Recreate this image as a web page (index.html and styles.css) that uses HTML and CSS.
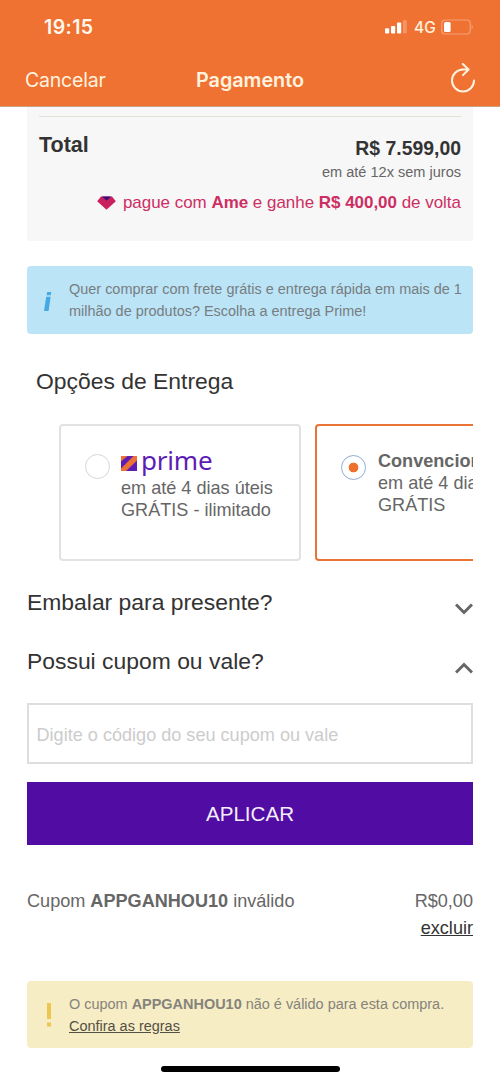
FILE: index.html
```html
<!DOCTYPE html>
<html lang="pt-BR">
<head>
<meta charset="utf-8">
<title>Pagamento</title>
<link rel="stylesheet" href="styles.css">
</head>
<body>
<header class="header">
  <div class="status">
    <span class="time">19:15</span>
    <div class="indicators">
      <svg class="signal" width="24" height="14" viewBox="0 0 24 14" fill="#fff"><rect x="1" y="8.2" width="4.2" height="5.2" rx="1"/><rect x="7" y="6" width="4.2" height="7.4" rx="1"/><rect x="13" y="2.6" width="4.2" height="10.8" rx="1"/><rect x="19" y="0" width="3.8" height="13.4" rx="1" opacity=".25"/></svg>
      <span class="network">4G</span>
      <svg width="33" height="17" viewBox="0 0 33 17"><rect x=".7" y="1" width="28.5" height="14" rx="3.5" fill="none" stroke="#f5a076" stroke-width="1.2"/><rect x="3" y="3" width="6.6" height="10" rx="1.5" fill="#fff"/><path d="M30.6 5.5q2.6 2.5 0 5z" fill="#f5a076"/></svg>
    </div>
  </div>
  <nav class="navbar">
    <span class="cancel">Cancelar</span>
    <h1 class="title">Pagamento</h1>
    <svg class="reload" width="26" height="30" viewBox="0 0 26 30" fill="none" stroke="#fff3df" stroke-width="2" stroke-linecap="round" stroke-linejoin="round"><path d="M24 17.5a11 11 0 1 1-11-11h5M12.8 1l5.8 5.5-5.6 5.6"/></svg>
  </nav>
</header>
<main class="content">
  <section class="summary">
    <div class="summary-row">
      <h2 class="total-label">Total</h2>
      <div class="amounts">
        <strong class="total">R$ 7.599,00</strong>
        <span class="installments">em até 12x sem juros</span>
      </div>
    </div>
    <p class="cashback">
      <svg width="19" height="14" viewBox="0 0 19 14"><path d="M4 .5h11l3.8 4.8L9.5 13.8.2 5.3z" fill="#c91f5c"/><path d="M5 .5h9L9.7 4.8z" fill="#36107f"/></svg>
      <span>pague com <b>Ame</b> e ganhe <b>R$ 400,00</b> de volta</span>
    </p>
  </section>
  <aside class="notice info">
    <svg class="notice-icon" width="11" height="22" viewBox="0 0 11 22" fill="#45a9e3"><path d="M5.2 1h4.1l-.6 3.2H4.6zM4.2 5.8h4.4L6.6 20H2z"/></svg>
    <p>Quer comprar com frete grátis e entrega rápida em mais de 1<br>milhão de produtos? Escolha a entrega Prime!</p>
  </aside>
  <h2 class="section-title">Opções de Entrega</h2>
  <div class="options">
    <div class="option">
      <span class="radio"></span>
      <div class="option-text">
        <div class="prime"><svg width="16" height="15" viewBox="0 0 16 15"><path fill="#5d1db5" d="M0 0h16v15H0z"/><path fill="#ed7135" d="M0 0h6.500L0 5.500zM16 0v4.500L5 15H0v-2.500L12.500 0z"/></svg><span class="prime-name">prime</span></div>
        <p>em até 4 dias úteis<br>GRÁTIS - ilimitado</p>
      </div>
    </div>
    <div class="option selected">
      <span class="radio"></span>
      <div class="option-text">
        <p><b>Convencional</b><br>em até 4 dias úteis<br>GRÁTIS</p>
      </div>
    </div>
  </div>
  <div class="accordion gift"><h2>Embalar para presente?</h2><svg width="18" height="12" viewBox="0 0 18 12" fill="none" stroke="#666" stroke-width="3"><path d="m1 1.500 8 8 8-8"/></svg></div>
  <div class="accordion coupon"><h2>Possui cupom ou vale?</h2><svg width="18" height="12" viewBox="0 0 18 12" fill="none" stroke="#666" stroke-width="3"><path d="m1 10.500 8-8 8 8"/></svg></div>
  <input class="code" type="text" placeholder="Digite o código do seu cupom ou vale">
  <button class="apply">APLICAR</button>
  <div class="coupon-result">
    <p>Cupom <b>APPGANHOU10</b> inválido</p>
    <div class="coupon-value"><span>R$0,00</span><a class="remove">excluir</a></div>
  </div>
  <aside class="notice warning">
    <svg class="notice-icon" width="11" height="26" viewBox="0 0 11 26" fill="#ebc650"><path d="M5 1h4v16H5zM5 20.500h4v4H5z"/></svg>
    <p>O cupom <b>APPGANHOU10</b> não é válido para esta compra.<br><a class="rules">Confira as regras</a></p>
  </aside>
</main>
<footer class="home"><span class="home-bar"></span></footer>
</body>
</html>
```
FILE: styles.css
```css
* { box-sizing: border-box; }
body { margin: 0; height: 1082px; overflow: hidden; background: #fff; color: #666; font-family: "Liberation Sans", Arial, sans-serif; }
h1, h2, p { margin: 0; font-weight: 400; }
.header { height: 107px; background: #ef7233; border-bottom: 1px solid #c8a184; color: #fff3df; font-family: Inter, sans-serif; }
.status { height: 54px; padding: 0 26px 0 44px; display: flex; justify-content: space-between; align-items: center; }
.time { font-size: 19.5px; font-weight: 600; letter-spacing: .4px; color: #fff8ec; }
.indicators { display: flex; align-items: center; }
.signal { margin-right: 6px; }
.network { width: 27px; font-size: 15.5px; font-weight: 500; }
.navbar { height: 52px; padding: 0 25px; display: grid; grid-template-columns: 1fr auto 1fr; align-items: center; }
.cancel { font-size: 19.5px; letter-spacing: -.2px; }
.title { font-size: 19.8px; font-weight: 600; }
.reload { justify-self: end; margin-right: -1px; margin-bottom: 4px; }
.content { padding: 0 27px; }
.summary { height: 134px; padding: 9px 12px 0; background: #f7f7f7; }
.summary-row { display: flex; justify-content: space-between; padding-top: 15px; border-top: 1px solid #dfe3d8; }
.total-label { font-size: 21.5px; line-height: 26px; font-weight: 700; color: #333; }
.amounts { display: flex; flex-direction: column; align-items: flex-end; padding-top: 3px; }
.total { font-size: 19.4px; line-height: 26px; color: #333; }
.installments { font-size: 14.55px; line-height: 23px; }
.cashback { display: flex; justify-content: flex-end; align-items: center; gap: 7px; margin-top: 6px; color: #cd2e63; font-size: 16.94px; line-height: 26px; white-space: nowrap; }
.notice { display: flex; align-items: center; height: 68px; padding-left: 15px; border-radius: 4px; font-size: 14.46px; line-height: 22px; color: #777d80; white-space: nowrap; }
.notice-icon { flex: none; margin-right: 16px; }
.info { margin-top: 25px; background: #bbe4f6; }
.info .notice-icon { margin-top: 3px; }
.section-title { margin: 34px 0 0 9px; font-size: 22.9px; line-height: 27px; color: #333; }
.options { display: flex; gap: 14px; margin-top: 29px; padding-left: 32px; overflow: hidden; }
.option { flex: none; width: 242px; height: 137px; padding: 24px 0 0 24px; display: flex; gap: 11px; border: 2px solid #e2e2e2; border-radius: 4px; font-size: 18.1px; line-height: 22px; white-space: nowrap; }
.radio { flex: none; width: 25px; height: 25px; margin-top: 4px; border: 1.5px solid #d6d6d6; border-radius: 50%; }
.prime { height: 27px; display: flex; align-items: center; gap: 4px; color: #5d1db5; }
.prime svg { margin-bottom: 1px; }
.prime-name { font: 26px/27px "Noto Sans", sans-serif; letter-spacing: -.2px; margin-top: -7px; }
.selected { border-color: #e87335; }
.selected .option-text { padding-left: 1px; }
.selected .radio { margin-top: 5px; border-color: #91acd3; background: radial-gradient(circle, #ed702d 0 4.5px, #fff 5.2px); }
.accordion { display: flex; justify-content: space-between; height: 26px; }
.accordion h2 { font-size: 22.9px; line-height: 24px; color: #333; }
.accordion svg { margin-top: 13px; flex: none; }
.gift { margin-top: 29px; }
.coupon { margin-top: 33px; }
.code { display: block; width: 446px; height: 61px; margin-top: 28px; padding: 3px 7.5px 0; border: 2px solid #dedede; font: 18.1px "Liberation Sans", sans-serif; outline: 0; }
.code::placeholder { color: #ccc; opacity: 1; }
.apply { display: block; width: 446px; height: 63px; margin-top: 18px; padding: 0; border: 0; background: #500ca3; color: #f4eefb; font: 20.6px "Liberation Sans", sans-serif; }
.coupon-result { display: flex; justify-content: space-between; margin-top: 43px; font-size: 18.1px; line-height: 27px; }
.coupon-value { display: flex; flex-direction: column; align-items: flex-end; }
.remove { color: #333; text-decoration: underline; }
.warning { height: 67px; margin-top: 39px; background: #f6edc4; color: #85837b; }
.rules { color: #555044; text-decoration: underline; }
.home { display: flex; justify-content: center; padding-top: 18px; }
.home-bar { width: 179px; height: 6px; border-radius: 3px; background: #000; }
```
